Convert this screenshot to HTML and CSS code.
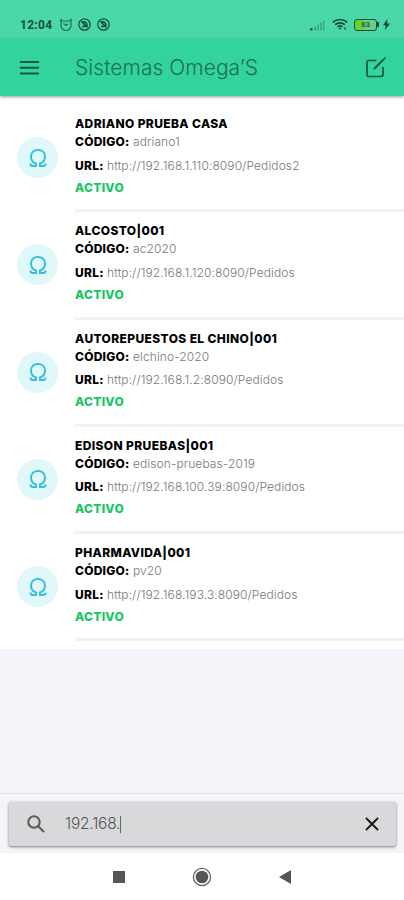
FILE: index.html
```
<!DOCTYPE html>
<html lang="es">
<head>
  <meta charset="utf-8">
  <meta name="viewport" content="width=device-width, initial-scale=1">
  <title>Sistemas Omega'S</title>
  <link rel="stylesheet" href="styles.css">
</head>
<body>
  <div class="status-bar">
    <div class="status-left">
      <span class="clock">12:04</span>
      <svg width="14" height="14" viewBox="0 0 14 14" fill="none" stroke="#1f6e55" stroke-width="1.200">
        <path d="M3.500 3h7a1.500 1.500 0 0 1 1.500 1.500v3a5 5 0 0 1-10 0v-3A1.500 1.500 0 0 1 3.500 3zM1 3l2-2M13 3l-2-2M4.500 5.500L7 7.500l2-1.500"/>
      </svg>
      <svg class="badge" width="13" height="13" viewBox="0 0 13 13" fill="none" stroke="#174c3e">
        <circle cx="6.500" cy="6.500" r="5.700" stroke-width="1.200"/>
        <path d="M4 4.500c3-1.500 5 0 5 3.500M3.500 3.500l6 6M4 8.500h3" stroke-width="1.700"/>
      </svg>
      <svg class="badge" width="13" height="13" viewBox="0 0 13 13" fill="none" stroke="#174c3e">
        <circle cx="6.500" cy="6.500" r="5.700" stroke-width="1.200"/>
        <path d="M4 4.500c3-1.500 5 0 5 3.500M3.500 3.500l6 6M4 8.500h3" stroke-width="1.700"/>
      </svg>
    </div>
    <div class="status-right">
      <svg width="15" height="12" viewBox="0 0 15 12">
        <path d="M0 9h2.500v2.500H0z" fill="#17654c"/>
        <path d="M4 7.500h2v4H4zM7 5.500h2v6H7zM10 3.500h1.800v8H10zM12.800 1.500h1.700v10h-1.700z" fill="#36ad88"/>
      </svg>
      <svg class="wifi" width="16" height="13" viewBox="0 0 16 13" fill="none" stroke="#174c3e" stroke-width="1.600">
        <path d="M.8 4.300c4-3.700 10.400-3.700 14.400 0M3.200 6.700c2.700-2.500 6.900-2.500 9.600 0M5.500 9c1.500-1.400 3.500-1.400 5 0"/>
        <path d="M6.500 9.800h3L8 12z" fill="#174c3e" stroke="none"/>
        <path d="M13 9v3" stroke="#277e62"/>
      </svg>
      <div class="battery"><span>83</span></div>
      <svg class="bolt" width="7" height="11" viewBox="0 0 7 11"><path d="M4.500 0L0 6.200h2.700L2 11l5-6.500H4z" fill="#104838"/></svg>
    </div>
  </div>

  <header class="toolbar">
    <svg class="menu-icon" width="20" height="14" viewBox="0 0 20 14"><path d="M0 0h19v2H0zM0 5.700h19v2H0zM0 11.400h19v2H0z" fill="#125743"/></svg>
    <h1>Sistemas Omega’S</h1>
    <svg class="edit-icon" width="22" height="22" viewBox="0 0 22 22" fill="none" stroke="#135641" stroke-width="1.700">
      <path d="M11.500 3.500H4A2 2 0 0 0 2 5.500v12A2 2 0 0 0 4 19.500h12a2 2 0 0 0 2-2V10"/>
      <path d="M9 12l10-10" stroke-width="2"/>
      <path d="M19.200 1.800l1.300-1.300"/>
    </svg>
  </header>

  <main class="list">
    <div class="item">
      <div class="avatar"><svg width="18" height="20" viewBox="0 0 18 20"><path d="M1.500 15.500c0 2 1 2.500 2.500 2.500h3v-2.500C4 14.500 2 12 2 8.500 2 4.500 5 2 9 2s7 2.500 7 6.500c0 3.500-2 6-5 7V18h3c1.500 0 2.500-.5 2.500-2.500"/></svg></div>
      <div class="info">
        <h2>ADRIANO PRUEBA CASA</h2>
        <p class="code"><b>CÓDIGO:</b> <span>adriano1</span></p>
        <p class="url"><b>URL:</b> <span>http://192.168.1.110:8090/Pedidos2</span></p>
        <p class="state">ACTIVO</p>
      </div>
    </div>
    <div class="item">
      <div class="avatar"><svg width="18" height="20" viewBox="0 0 18 20"><path d="M1.500 15.500c0 2 1 2.500 2.500 2.500h3v-2.500C4 14.500 2 12 2 8.500 2 4.500 5 2 9 2s7 2.500 7 6.500c0 3.500-2 6-5 7V18h3c1.500 0 2.500-.5 2.500-2.500"/></svg></div>
      <div class="info">
        <h2>ALCOSTO|001</h2>
        <p class="code"><b>CÓDIGO:</b> <span>ac2020</span></p>
        <p class="url"><b>URL:</b> <span>http://192.168.1.120:8090/Pedidos</span></p>
        <p class="state">ACTIVO</p>
      </div>
    </div>
    <div class="item">
      <div class="avatar"><svg width="18" height="20" viewBox="0 0 18 20"><path d="M1.500 15.500c0 2 1 2.500 2.500 2.500h3v-2.500C4 14.500 2 12 2 8.500 2 4.500 5 2 9 2s7 2.500 7 6.500c0 3.500-2 6-5 7V18h3c1.500 0 2.500-.5 2.500-2.500"/></svg></div>
      <div class="info">
        <h2>AUTOREPUESTOS EL CHINO|001</h2>
        <p class="code"><b>CÓDIGO:</b> <span>elchino-2020</span></p>
        <p class="url"><b>URL:</b> <span>http://192.168.1.2:8090/Pedidos</span></p>
        <p class="state">ACTIVO</p>
      </div>
    </div>
    <div class="item">
      <div class="avatar"><svg width="18" height="20" viewBox="0 0 18 20"><path d="M1.500 15.500c0 2 1 2.500 2.500 2.500h3v-2.500C4 14.500 2 12 2 8.500 2 4.500 5 2 9 2s7 2.500 7 6.500c0 3.500-2 6-5 7V18h3c1.500 0 2.500-.5 2.500-2.500"/></svg></div>
      <div class="info">
        <h2>EDISON PRUEBAS|001</h2>
        <p class="code"><b>CÓDIGO:</b> <span>edison-pruebas-2019</span></p>
        <p class="url"><b>URL:</b> <span>http://192.168.100.39:8090/Pedidos</span></p>
        <p class="state">ACTIVO</p>
      </div>
    </div>
    <div class="item">
      <div class="avatar"><svg width="18" height="20" viewBox="0 0 18 20"><path d="M1.500 15.500c0 2 1 2.500 2.500 2.500h3v-2.500C4 14.500 2 12 2 8.500 2 4.500 5 2 9 2s7 2.500 7 6.500c0 3.500-2 6-5 7V18h3c1.500 0 2.500-.5 2.500-2.500"/></svg></div>
      <div class="info">
        <h2>PHARMAVIDA|001</h2>
        <p class="code"><b>CÓDIGO:</b> <span>pv20</span></p>
        <p class="url"><b>URL:</b> <span>http://192.168.193.3:8090/Pedidos</span></p>
        <p class="state">ACTIVO</p>
      </div>
    </div>
  </main>

  <footer class="search-footer">
    <div class="search">
      <svg width="18" height="18" viewBox="0 0 18 18" fill="none" stroke="#5b5c5d" stroke-width="2.100">
        <circle cx="7" cy="7" r="5.700"/><path d="M11 11l6 6"/>
      </svg>
      <span class="query">192.168.</span><i class="caret"></i>
      <svg class="clear" width="14" height="14" viewBox="0 0 14 14" fill="none" stroke="#18191a" stroke-width="1.900"><path d="M1 1l12 12M13 1L1 13"/></svg>
    </div>
  </footer>

  <nav class="nav-bar">
    <svg width="12" height="12" viewBox="0 0 12 12"><path d="M0 0h12v12H0z" fill="#555"/></svg>
    <svg width="20" height="20" viewBox="0 0 20 20"><circle cx="10" cy="10" r="8.600" fill="none" stroke="#666" stroke-width="1.300"/><circle cx="10" cy="10" r="6.300" fill="#555"/></svg>
    <svg width="12" height="14" viewBox="0 0 12 14"><path d="M12 0v14L0 7z" fill="#555"/></svg>
  </nav>
</body>
</html>
```
FILE: styles.css
```
* {
  box-sizing: border-box;
}
body {
  margin: 0;
  height: 900px;
  display: flex;
  flex-direction: column;
  background: #f3f5fa;
  font-family: Inter, "Open Sans", sans-serif;
  overflow: hidden;
}
svg {
  display: block;
  flex: none;
}
h1, h2, p {
  margin: 0;
}
.status-bar {
  height: 39px;
  padding: 11px 14px 0 20px;
  background: #4bd8a8;
  display: flex;
  justify-content: space-between;
  flex: none;
}
.status-left, .status-right {
  display: flex;
  align-items: center;
  height: 27px;
}
.clock {
  width: 39px;
  font: 700 12px Roboto, sans-serif;
  letter-spacing: 0.3px;
  color: #174c3e;
}
.badge {
  margin-left: 5px;
}
.badge + .badge {
  margin-left: 6px;
}
.wifi {
  margin-left: 7px;
}
.battery {
  position: relative;
  width: 23px;
  height: 12px;
  margin-left: 6px;
  border: 1.5px solid #174c3e;
  border-radius: 3px;
  background: linear-gradient(90deg, #65d52b 45%, #68cf83 45%);
  display: flex;
  align-items: center;
  justify-content: center;
}
.battery::after {
  content: '';
  position: absolute;
  top: 2px;
  right: -3px;
  width: 2px;
  height: 5px;
  background: #174c3e;
}
.battery span {
  font: 700 8px/9px Roboto, sans-serif;
  color: #22644e;
}
.bolt {
  margin-left: 6px;
}
.toolbar {
  position: relative;
  height: 57px;
  padding: 0 17px 0 20px;
  background: #32d49c;
  box-shadow: 0 1px 3px rgba(0, 0, 0, 0.4);
  display: flex;
  align-items: center;
  flex: none;
}
.toolbar h1 {
  flex: 1;
  margin-left: 35px;
  font-size: 21px;
  line-height: 54px;
  font-weight: 300;
  letter-spacing: 0.05px;
  color: #1b6f56;
}
.list {
  height: 553px;
  padding-top: 9px;
  background: #fff;
  flex: none;
}
.item {
  height: 107.3px;
  padding-left: 17px;
  display: flex;
}
.avatar {
  width: 41px;
  height: 41px;
  margin: 32px 17px 0 0;
  border-radius: 50%;
  background: #e0f8fa;
  display: flex;
  align-items: center;
  justify-content: center;
}
.avatar path {
  fill: none;
  stroke: #35bfdc;
  stroke-width: 2;
}
.info {
  flex: 1;
  padding-top: 10px;
  border-bottom: 3px solid #f2f2f3;
  font-size: 12px;
  white-space: nowrap;
}
.info h2 {
  font-size: 12px;
  line-height: 18px;
  font-weight: 800;
  letter-spacing: 0.38px;
  color: #000;
}
.info b {
  font-weight: 800;
  letter-spacing: 0.25px;
  color: #000;
}
.info span {
  font-weight: 300;
  letter-spacing: 0.1px;
  color: #777;
}
.code {
  line-height: 18px;
}
.url {
  padding-top: 2.5px;
  line-height: 23px;
}
.state {
  line-height: 22px;
  font-weight: 800;
  letter-spacing: 0.3px;
  color: #16c760;
}
.search-footer {
  margin-top: auto;
  height: 60px;
  padding: 8px 8px 0 9px;
  border-top: 1px solid #e0e2e7;
  flex: none;
}
.search {
  height: 44px;
  padding: 0 17px 0 18px;
  border-radius: 2px;
  background: #d8d9da;
  box-shadow: 0 1px 3px rgba(0, 0, 0, 0.5);
  display: flex;
  align-items: center;
}
.query {
  margin-left: 20px;
  padding-bottom: 2px;
  font-size: 15.5px;
  font-weight: 300;
  letter-spacing: -0.2px;
  color: #555;
}
.caret {
  width: 1px;
  height: 17px;
  background: #666;
}
.clear {
  margin-left: auto;
}
.nav-bar {
  height: 47px;
  padding: 0 113px;
  background: #fff;
  display: flex;
  align-items: center;
  justify-content: space-between;
  flex: none;
}
```
